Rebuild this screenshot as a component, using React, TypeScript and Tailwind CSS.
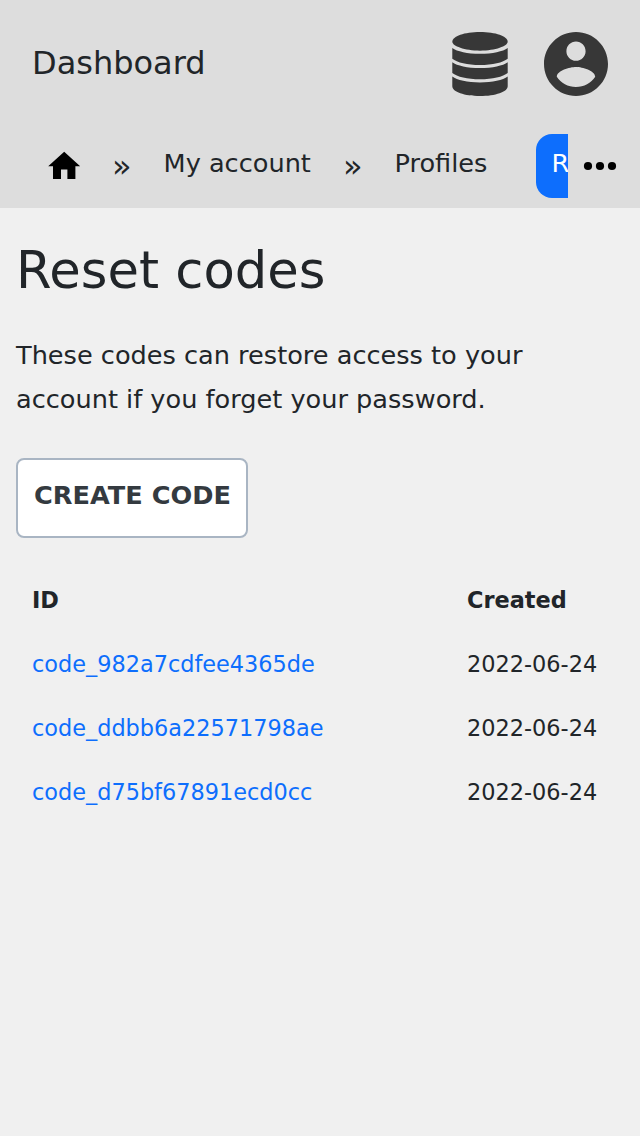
const codes = ["code_982a7cdfee4365de", "code_ddbb6a22571798ae", "code_d75bf67891ecd0cc"];

function DatabaseIcon() {
  return (
    <svg viewBox="0 0 64 64" className="mr-8 size-16 fill-[#373737]">
      <path d="M4.3 9.8C4.3 4.2 16.5 0 32 0S59.7 4.2 59.7 9.8C59.7 14 47.5 18.7 32 18.7S4.3 14 4.3 9.8Z" />
      <path d="M4.3 16C9 19.5 19.5 21.8 32 21.8S55 19.5 59.7 16V26.7C55 30.5 44.5 33 32 33S9 30.5 4.3 26.7Z" />
      <path d="M4.3 30.3C9 33.8 19.5 36.1 32 36.1S55 33.8 59.7 30.3V41C55 44.8 44.5 47.3 32 47.3S9 44.8 4.3 41Z" />
      <path d="M4.3 44.6C9 48.1 19.5 50.5 32 50.5S55 48.1 59.7 44.6V54.2C59.7 59.8 47.5 64 32 64S4.3 59.8 4.3 54.2Z" />
    </svg>
  );
}

function AccountIcon() {
  return (
    <svg viewBox="2 2 20 20" className="size-16 fill-[#373737]">
      <path d="M12 2C6.48 2 2 6.48 2 12s4.48 10 10 10 10-4.48 10-10S17.52 2 12 2zm0 3c1.66 0 3 1.34 3 3s-1.34 3-3 3-3-1.34-3-3 1.34-3 3-3zm0 14.2c-2.5 0-4.71-1.28-6-3.22.03-1.99 4-3.08 6-3.08 1.99 0 5.97 1.09 6 3.08-1.29 1.94-3.5 3.22-6 3.22z" />
    </svg>
  );
}

function HomeIcon() {
  return (
    <svg viewBox="0 0 24 24" className="mt-px size-[38.4px] fill-black">
      <path d="M10 20v-6h4v6h5v-8h3L12 3 2 12h3v8z" />
    </svg>
  );
}

function MoreIcon() {
  return (
    <svg viewBox="0 0 48 48" className="ml-2 mt-2 size-12 fill-black">
      <circle cx="12" cy="24" r="4.1" />
      <circle cx="24" cy="24" r="4.1" />
      <circle cx="36" cy="24" r="4.1" />
    </svg>
  );
}

export default function App() {
  return (
    <div className="min-h-[1136px] w-[640px] bg-[#f0f0f0] font-['DejaVu_Sans',sans-serif] text-[#212529]">
      <header className="h-[208px] bg-[#dddddd]">
        <div className="flex h-32 items-center px-8">
          <a className="mr-auto pb-0.5 text-[32px] leading-[48px]">Dashboard</a>
          <DatabaseIcon />
          <AccountIcon />
        </div>
        <nav className="flex h-20 items-start pt-[6px] text-[25.6px]">
          <div className="flex h-16 w-[568px] overflow-hidden whitespace-nowrap">
            <a className="ml-[44.8px] flex w-[38.4px] shrink-0 items-center"><HomeIcon /></a>
            <span className="ml-[28.8px] text-[32px] leading-[64px]">»</span>
            <a className="ml-8 leading-[58px]">My account</a>
            <span className="ml-8 text-[32px] leading-[64px]">»</span>
            <a className="ml-8 leading-[58px]">Profiles</a>
            <a className="ml-[48.6px] shrink-0 rounded-2xl bg-[#0d6efd] pl-[15.6px] pr-4 leading-[58px] text-white">Reset codes</a>
          </div>
          <MoreIcon />
        </nav>
      </header>
      <main className="px-4 pt-6">
        <h1 className="text-[51.2px] leading-[76px]">Reset codes</h1>
        <p className="mt-[25px] text-[25.6px] leading-[44px]">These codes can restore access to your account if you forget your password.</p>
        <button className="mt-[37px] block h-20 w-[232px] whitespace-nowrap rounded-lg border-2 border-[#a9b5c3] bg-white pb-1.5 pl-px text-[25.6px] font-bold text-[#343a40]">CREATE CODE</button>
        <table className="mt-[30px] w-full table-fixed text-left text-[22.4px] leading-8">
          <thead><tr className="h-16"><th className="w-[435px] px-4">ID</th><th className="px-4">Created</th></tr></thead>
          <tbody>{codes.map((code) => (
            <tr key={code} className="h-16"><td className="px-4"><a className="text-[#0d6efd]">{code}</a></td><td className="whitespace-nowrap px-4">2022-06-24</td></tr>
          ))}</tbody>
        </table>
      </main>
    </div>
  );
}
